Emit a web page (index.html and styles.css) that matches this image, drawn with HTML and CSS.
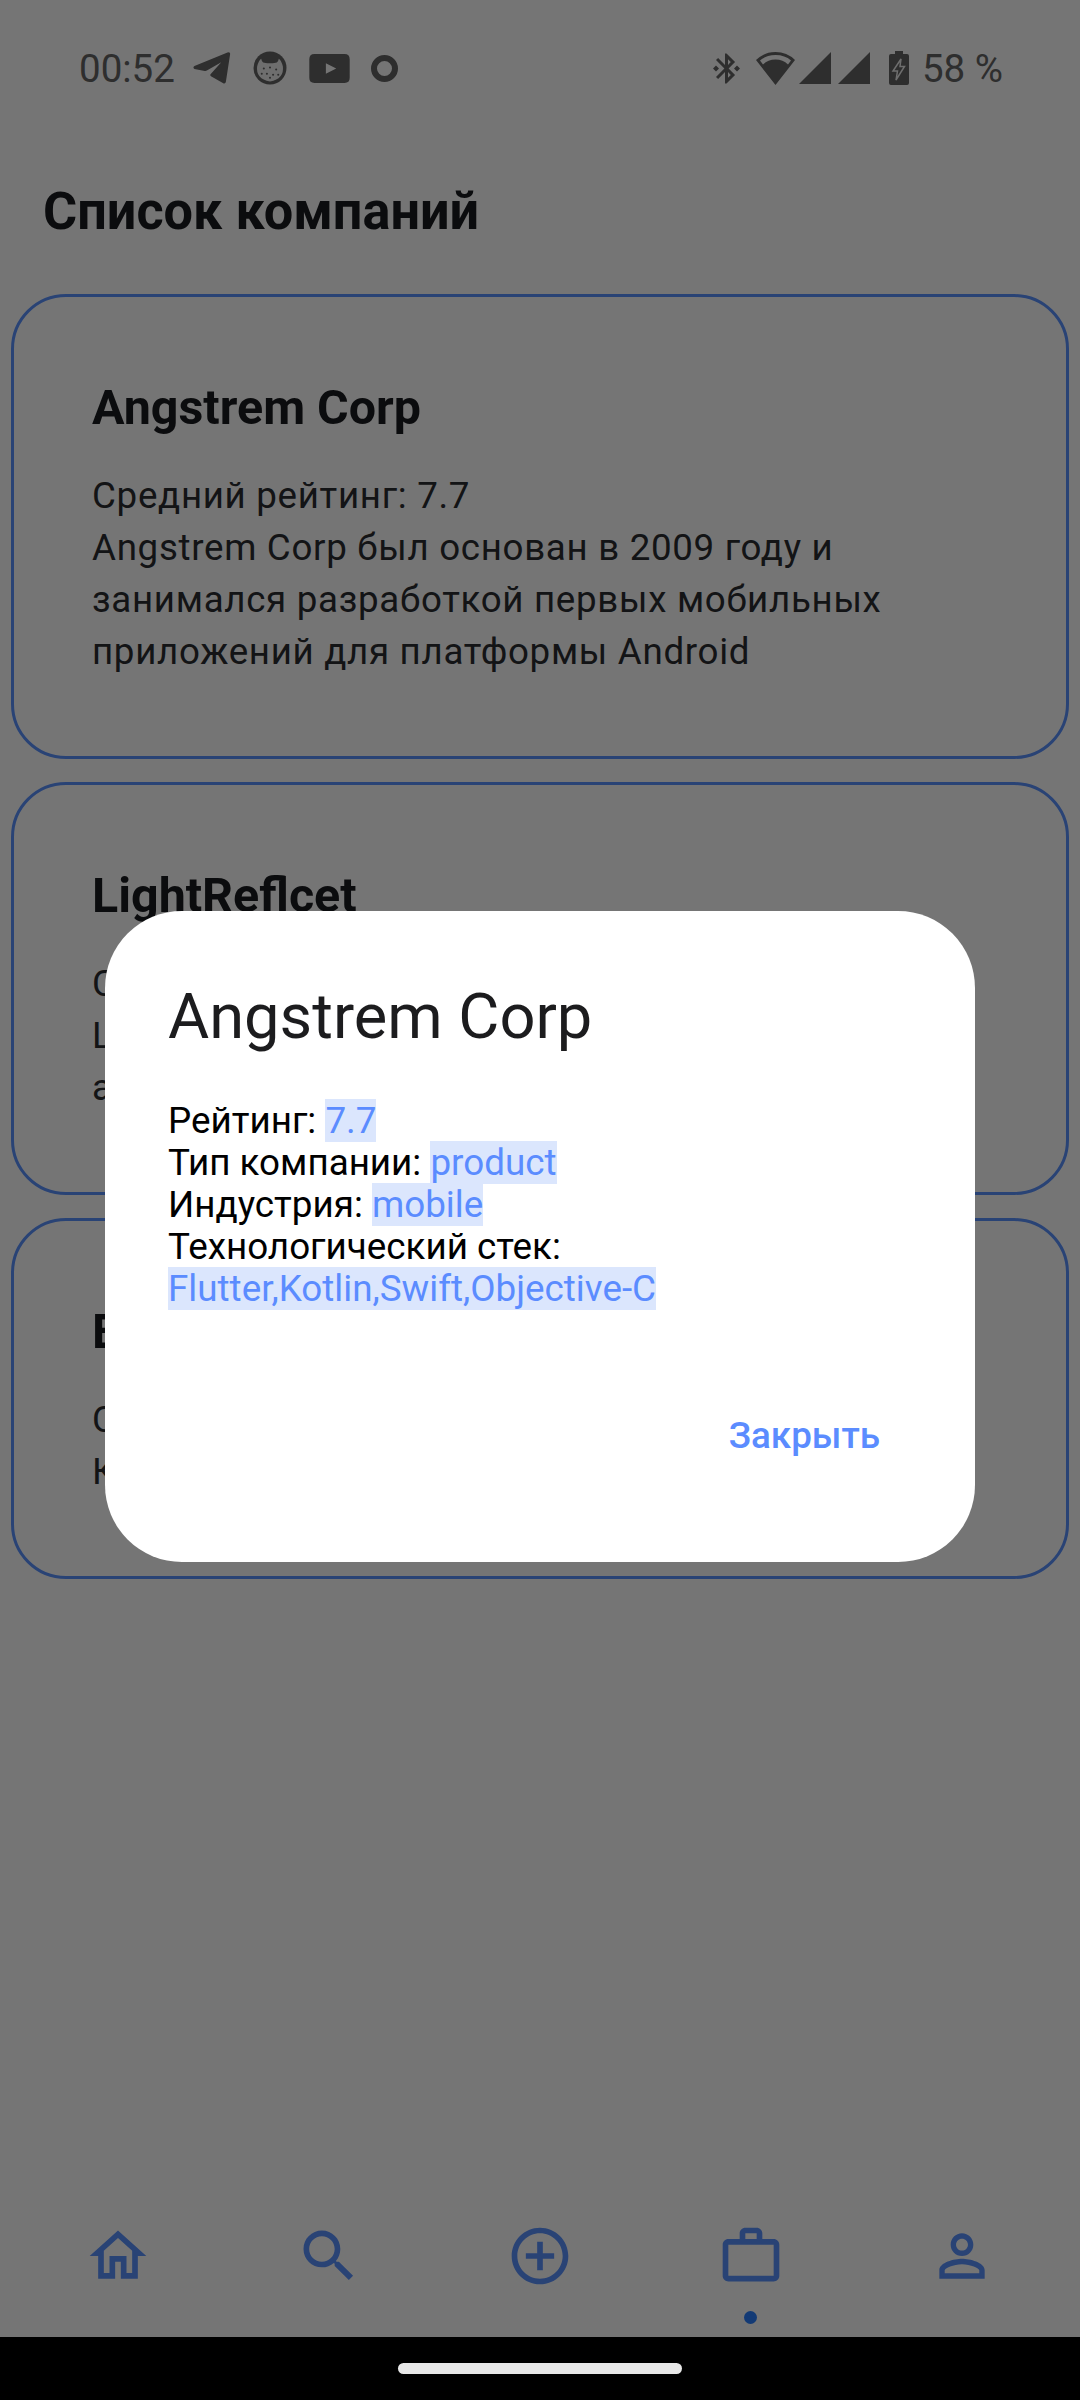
FILE: index.html
```html
<!DOCTYPE html>
<html lang="ru">

<head>
    <meta charset="UTF-8">
    <meta name="viewport" content="width=device-width, initial-scale=1.0">
    <title>Список компаний</title>
    <link rel="stylesheet" href="styles.css">
</head>

<body>
    <div class="page">
        <div class="status-bar">
            <div class="status-left">
                <span class="clock">00:52</span>
                <svg class="st-telegram" viewBox="0 0 36 31"><path d="M1 13.500L33 .5Q36 -.5 35.500 2.500L31.500 28.500Q31 31.500 28.500 30L17 23.500Q15.500 22.500 17 21L27 10L13 18Q12 18.500 11 18.300L1 16.500Q-1 15 1 13.500Z"/></svg>
                <svg class="st-cat" viewBox="0 0 32 33"><circle cx="16" cy="16.500" r="16"/><path class="face" d="M3.500 15Q5 9 7.500 7.500Q8 11 10.500 11.500Q16 12.500 21.500 11.500Q24 11 24.500 7.500Q27 9 28.500 15Q30 27 16 29.500Q2 27 3.500 15Z"/><g class="freckles"><circle cx="10" cy="17" r="1"/><circle cx="16" cy="16" r="1"/><circle cx="22" cy="18" r="1"/><circle cx="13" cy="22" r="1"/><circle cx="19" cy="23" r="1"/><circle cx="8" cy="22" r="1"/><circle cx="24" cy="23" r="1"/><circle cx="16" cy="26" r="1"/></g></svg>
                <svg class="st-youtube" viewBox="0 0 39 28"><path fill-rule="evenodd" d="M5 0H34Q39 0 39 5V23Q39 28 34 28H5Q0 28 0 23V5Q0 0 5 0ZM16 9V19L26 14Z"/></svg>
                <svg class="st-ring" viewBox="0 0 27 27"><circle cx="13.500" cy="13.500" r="10.500"/></svg>
            </div>
            <div class="status-right">
                <svg class="st-bluetooth" viewBox="3 2 18 20"><path d="M7 12l-2-2-2 2 2 2 2-2zm10.710-4.290L12 2h-1v7.590L6.410 5 5 6.410 10.590 12 5 17.590 6.410 19 11 14.410V22h1l5.710-5.710-4.300-4.290 4.300-4.290zM13 5.830l1.880 1.880L13 9.590V5.830zm1.880 10.460L13 18.170v-3.760l1.880 1.880zM19 10l-2 2 2 2 2-2-2-2z"/></svg>
                <svg class="st-wifi" viewBox="0 0 39 33"><path d="M19.500 0Q31 0 39 8L19.500 33L0 8Q8 0 19.500 0ZM19.500 3Q10 3 4 8.500L7 12.500Q12 7.500 19.500 7.500Q27 7.500 32 12.500L35 8.500Q29 3 19.500 3Z" fill-rule="evenodd"/></svg>
                <svg class="st-signal" viewBox="0 0 32 32"><path d="M32 0V32H0Z"/></svg>
                <svg class="st-signal st-signal-two" viewBox="0 0 32 32"><path d="M32 0V32H0Z"/></svg>
                <svg class="st-battery" viewBox="0 0 20 34"><path d="M6 0H14V3H18Q20 3 20 5V32Q20 34 18 34H2Q0 34 0 32V5Q0 3 2 3H6Z"/><path class="bolt" d="M12 8L4 20H8.500L7 29L15.500 15.500H11L12 8Z"/></svg>
                <span class="battery-text">58 %</span>
            </div>
        </div>

        <main class="content">
            <h1 class="page-title">Список компаний</h1>
            <div class="card-list">
                <div class="card">
                    <h2 class="card-title">Angstrem Corp</h2>
                    <p class="card-text">Средний рейтинг: 7.7<br>Angstrem Corp был основан в 2009 году и<br>занимался разработкой первых мобильных<br>приложений для платформы Android</p>
                </div>
                <div class="card">
                    <h2 class="card-title">LightReflcet</h2>
                    <p class="card-text">Средний рейтинг: 8.1<br>LightReflcet был основан в 2012 году и<br>активно развивает свои продукты</p>
                </div>
                <div class="card">
                    <h2 class="card-title">EcoTech</h2>
                    <p class="card-text">Средний рейтинг: 6.9<br>Компания занимается экологией</p>
                </div>
            </div>
        </main>

        <nav class="bottom-nav">
            <div class="nav-item">
                <svg class="nav-icon" viewBox="0 0 24 24"><path d="M12 5.690l5 4.500V18h-2v-6H9v6H7v-7.810l5-4.500M12 3L2 12h3v8h6v-6h2v6h6v-8h3L12 3z"/></svg>
            </div>
            <div class="nav-item">
                <svg class="nav-icon" viewBox="0 0 24 24"><path d="M15.500 14h-.79l-.28-.27C15.410 12.590 16 11.110 16 9.500 16 5.910 13.090 3 9.500 3S3 5.910 3 9.500 5.910 16 9.500 16c1.610 0 3.090-.59 4.230-1.570l.27.28v.79l5 4.990L20.490 19l-4.990-5zm-6 0C7.010 14 5 11.990 5 9.500S7.010 5 9.500 5 14 7.010 14 9.500 11.990 14 9.500 14z"/></svg>
            </div>
            <div class="nav-item">
                <svg class="nav-icon" viewBox="0 0 24 24"><path d="M13 7h-2v4H7v2h4v4h2v-4h4v-2h-4V7zm-1-5C6.480 2 2 6.480 2 12s4.480 10 10 10 10-4.480 10-10S17.520 2 12 2zm0 18c-4.410 0-8-3.590-8-8s3.590-8 8-8 8 3.590 8 8-3.590 8-8 8z"/></svg>
            </div>
            <div class="nav-item">
                <svg class="nav-icon" viewBox="0 0 24 24"><path d="M14 6V4h-4v2h4zM4 8v11h16V8H4zm16-2c1.110 0 2 .89 2 2v11c0 1.110-.89 2-2 2H4c-1.110 0-2-.89-2-2l.01-11c0-1.110.88-2 1.990-2h4V4c0-1.110.89-2 2-2h4c1.110 0 2 .89 2 2v2h4z"/></svg>
                <span class="nav-dot"></span>
            </div>
            <div class="nav-item">
                <svg class="nav-icon" viewBox="0 0 24 24"><path d="M12 5.900c1.160 0 2.100.94 2.100 2.100s-.94 2.100-2.100 2.100S9.900 9.160 9.900 8s.94-2.100 2.100-2.100m0 9c2.970 0 6.100 1.460 6.100 2.100v1.100H5.900V17c0-.64 3.130-2.100 6.100-2.100M12 4C9.790 4 8 5.790 8 8s1.790 4 4 4 4-1.790 4-4-1.790-4-4-4zm0 9c-2.670 0-8 1.340-8 4v3h16v-3c0-2.660-5.330-4-8-4z"/></svg>
            </div>
        </nav>

        <div class="system-bar"><span class="home-handle"></span></div>

        <div class="overlay">
            <div class="dialog">
                <h2 class="dialog-title">Angstrem Corp</h2>
                <div class="dialog-text">
                    <div>Рейтинг: <span class="mark">7.7</span></div>
                    <div>Тип компании: <span class="mark">product</span></div>
                    <div>Индустрия: <span class="mark">mobile</span></div>
                    <div>Технологический стек:</div>
                    <div><span class="mark">Flutter,Kotlin,Swift,Objective-C</span></div>
                </div>
                <div class="dialog-actions">
                    <span class="close-button">Закрыть</span>
                </div>
            </div>
        </div>
    </div>
</body>

</html>
```

FILE: styles.css
```css
body {
    margin: 0;
    font-family: Roboto, "Noto Sans", sans-serif;
    background: #fff;
}

.page {
    position: relative;
    width: 1080px;
    height: 2400px;
    overflow: hidden;
    display: flex;
    flex-direction: column;
}

/* status bar */
.status-bar {
    display: flex;
    justify-content: space-between;
    align-items: center;
    height: 38px;
    padding: 49px 77px 0 79px;
    color: #646464;
    fill: #646464;
    font-size: 38.5px;
}

.status-left,
.status-right {
    display: flex;
    align-items: center;
}

.clock {
    margin-right: 18px;
}

.st-telegram {
    width: 38px;
    height: 32px;
    margin-right: 22px;
}

.st-cat {
    width: 34px;
    height: 34px;
    margin-right: 22px;
}

.st-cat .face {
    fill: #f0f0f0;
}

.st-cat .freckles {
    fill: #646464;
}

.st-youtube {
    width: 41px;
    height: 29px;
    margin-right: 21px;
}

.st-ring {
    width: 27px;
    height: 27px;
    fill: none;
    stroke: #646464;
    stroke-width: 6px;
}

.st-bluetooth {
    width: 27px;
    height: 33px;
    margin-right: 16px;
}

.st-wifi {
    width: 39px;
    height: 33px;
    margin-right: 4px;
}

.st-signal {
    width: 32px;
    height: 32px;
}

.st-signal-two {
    margin-left: 7px;
    margin-right: 19px;
}

.st-battery {
    width: 20px;
    height: 34px;
    margin-right: 13px;
}

.st-battery .bolt {
    fill: #646464;
    stroke: #f0f0f0;
    stroke-width: 1.5px;
}

/* list */
.content {
    flex: 1;
    padding: 0 11px;
}

.page-title {
    margin: 96px 0 53px 32px;
    font-size: 52.25px;
    line-height: 58px;
    font-weight: 700;
    color: #1a1b1f;
}

.card-list {
    display: flex;
    flex-direction: column;
    gap: 23px;
}

.card {
    border: 3px solid #5b92ff;
    border-radius: 55px;
    padding: 83px 78px 78px;
}

.card-title {
    margin: 0 0 34px;
    font-size: 48.4px;
    line-height: 56px;
    font-weight: 700;
    color: #1a1b1f;
}

.card-text {
    margin: 0;
    font-size: 36.7px;
    line-height: 52px;
    letter-spacing: 0.7px;
    color: #2b2c30;
}

/* bottom navigation */
.bottom-nav {
    display: grid;
    grid-template-columns: repeat(5, 211px);
    padding: 0 14px 13px 12px;
}

.nav-item {
    display: flex;
    flex-direction: column;
    align-items: center;
    height: 102px;
}

.nav-icon {
    width: 68px;
    height: 68px;
    fill: #5b92ff;
}

.nav-dot {
    width: 13px;
    height: 13px;
    margin-top: 21px;
    border-radius: 50%;
    background: #2a7fff;
}

/* black bar sits above the dim layer */
.system-bar {
    position: relative;
    z-index: 2;
    height: 63px;
    background: #000;
    display: flex;
    justify-content: center;
    padding-top: 26px;
    box-sizing: border-box;
}

.home-handle {
    width: 284px;
    height: 11px;
    border-radius: 6px;
    background: #e8e8e8;
}

/* dialog */
.overlay {
    position: absolute;
    inset: 0;
    z-index: 1;
    padding-top: 72px;
    display: flex;
    align-items: center;
    justify-content: center;
    background: rgba(0, 0, 0, 0.54);
}

.dialog {
    width: 870px;
    box-sizing: border-box;
    padding: 68px 95px 105px 63px;
    border-radius: 77px;
    background: #fff;
}

.dialog-title {
    margin: 0 0 47px;
    font-size: 63.2px;
    line-height: 74px;
    font-weight: 400;
    color: #1c1c1e;
}

.dialog-text {
    font-size: 36.8px;
    line-height: 42px;
    color: #000;
}

.mark {
    background: #dbe6fd;
    color: #5b8cff;
}

.dialog-actions {
    display: flex;
    justify-content: flex-end;
    margin-top: 105px;
}

.close-button {
    font-size: 36.8px;
    line-height: 42px;
    font-weight: 500;
    color: #5b8cff;
}
```
